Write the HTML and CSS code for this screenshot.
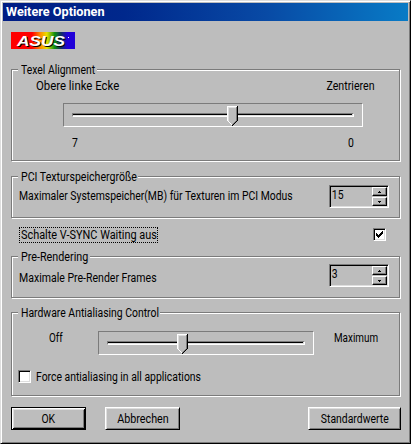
FILE: index.html
```html
<!DOCTYPE html>
<html lang="de">
<head>
    <meta charset="UTF-8">
    <meta name="viewport" content="width=device-width, initial-scale=1.0">
    <title>Weitere Optionen</title>
    <link rel="stylesheet" href="styles.css">
</head>
<body>
    <div class="window">
        <div class="title-bar">Weitere Optionen</div>

        <div class="content">
            <svg class="logo" width="64" height="17" viewBox="0 0 64 17">
                <defs>
                    <linearGradient id="rainbow">
                        <stop offset="0.33" stop-color="#ff0000"/>
                        <stop offset="0.46" stop-color="#ff8c00"/>
                        <stop offset="0.56" stop-color="#e8e000"/>
                        <stop offset="0.68" stop-color="#109010"/>
                        <stop offset="0.78" stop-color="#103060"/>
                        <stop offset="0.88" stop-color="#2000d8"/>
                    </linearGradient>
                </defs>
                <rect width="64" height="17" fill="url(#rainbow)"/>
                <text class="logo-shadow" x="7" y="15" textLength="48" lengthAdjust="spacingAndGlyphs">ASUS</text>
                <text class="logo-text" x="6" y="14" textLength="48" lengthAdjust="spacingAndGlyphs">ASUS</text>
                <rect x="57" y="5" width="1" height="1" fill="#fff"/>
            </svg>

            <div class="group texel">
                <div class="legend"><span class="text">Texel Alignment</span></div>
                <div class="labels ends">
                    <span class="text left-end">Obere linke Ecke</span>
                    <span class="text right-end">Zentrieren</span>
                </div>
                <div class="slider">
                    <div class="track"></div>
                    <svg class="thumb" width="11" height="20" viewBox="0 0 11 20" shape-rendering="crispEdges">
                        <path d="M0 0H11V15L6 20H5L0 15Z" fill="#bdbdbd"/>
                        <path d="M.5 15V.5H10M1 15.5h1M2 16.5h1M3 17.5h1M4 18.5h1" fill="none" stroke="#fff"/>
                        <path d="M1.5 15V1.5H9" fill="none" stroke="#dedede"/>
                        <path d="M9.5 1V15M8 15.5h1M7 16.5h1M6 17.5h1M5 18.5h1" fill="none" stroke="#7b7b7b"/>
                        <path d="M10.5 0V15M9 15.5h1M8 16.5h1M7 17.5h1M6 18.5h1M5 19.5h1" fill="none" stroke="#000"/>
                    </svg>
                </div>
                <div class="labels range">
                    <span class="text">7</span>
                    <span class="text">0</span>
                </div>
            </div>

            <div class="group pci">
                <div class="legend"><span class="text">PCI Texturspeichergröße</span></div>
                <div class="row">
                    <span class="text">Maximaler Systemspeicher(MB) für Texturen im PCI Modus</span>
                    <div class="spinner">
                        <span class="text value">15</span>
                        <div class="arrows">
                            <div class="arrow"><svg width="3" height="2" shape-rendering="crispEdges"><path d="M1 0h1v1H1zM0 1h3v1H0z"/></svg></div>
                            <div class="arrow"><svg width="3" height="2" shape-rendering="crispEdges"><path d="M0 0h3v1H0zM1 1h1v1H1z"/></svg></div>
                        </div>
                    </div>
                </div>
            </div>

            <div class="vsync">
                <div class="focus"><span class="text">Schalte V-SYNC Waiting aus</span></div>
                <div class="checkbox">
                    <svg width="7" height="7" shape-rendering="crispEdges"><path d="M0 2h1v1h1v1h1V3h1V2h1V1h1V0h1v3H6v1H5v1H4v1H3v1H2V6H1V5H0z"/></svg>
                </div>
            </div>

            <div class="group pre">
                <div class="legend"><span class="text">Pre-Rendering</span></div>
                <div class="row">
                    <span class="text">Maximale Pre-Render Frames</span>
                    <div class="spinner">
                        <span class="text value">3</span>
                        <div class="arrows">
                            <div class="arrow"><svg width="3" height="2" shape-rendering="crispEdges"><path d="M1 0h1v1H1zM0 1h3v1H0z"/></svg></div>
                            <div class="arrow"><svg width="3" height="2" shape-rendering="crispEdges"><path d="M0 0h3v1H0zM1 1h1v1H1z"/></svg></div>
                        </div>
                    </div>
                </div>
            </div>

            <div class="group antialias">
                <div class="legend"><span class="text">Hardware Antialiasing Control</span></div>
                <div class="aa-row">
                    <span class="text off">Off</span>
                    <div class="slider">
                        <div class="track"></div>
                        <svg class="thumb" width="11" height="20" viewBox="0 0 11 20" shape-rendering="crispEdges">
                            <path d="M0 0H11V15L6 20H5L0 15Z" fill="#bdbdbd"/>
                            <path d="M.5 15V.5H10M1 15.5h1M2 16.5h1M3 17.5h1M4 18.5h1" fill="none" stroke="#fff"/>
                            <path d="M1.5 15V1.5H9" fill="none" stroke="#dedede"/>
                            <path d="M9.5 1V15M8 15.5h1M7 16.5h1M6 17.5h1M5 18.5h1" fill="none" stroke="#7b7b7b"/>
                            <path d="M10.5 0V15M9 15.5h1M8 16.5h1M7 17.5h1M6 18.5h1M5 19.5h1" fill="none" stroke="#000"/>
                        </svg>
                    </div>
                    <span class="text maximum">Maximum</span>
                </div>
                <div class="force">
                    <div class="checkbox"></div>
                    <span class="text">Force antialiasing in all applications</span>
                </div>
            </div>

            <div class="buttons">
                <div class="button default"><span class="text">OK</span></div>
                <div class="button"><span class="text cancel">Abbrechen</span></div>
                <div class="button wide"><span class="text">Standardwerte</span></div>
            </div>
        </div>
    </div>
</body>
</html>
```
FILE: styles.css
```css
* {
    box-sizing: border-box;
}
body {
    margin: 0;
    font-family: Roboto, "Liberation Sans", sans-serif;
    font-size: 12.5px;
    line-height: 16px;
    color: #000;
    white-space: nowrap;
}
svg {
    display: block;
}
/* Condensed dialog font */
.text {
    display: inline-block;
    transform: scaleX(0.832);
    transform-origin: left;
}
.window {
    width: 411px;
    height: 444px;
    padding: 1px;
    background-color: #bdbdbd;
    border: 1px solid #dedede;
    border-right-color: #000;
    border-bottom-color: #000;
    box-shadow: inset 1px 1px #fff, inset -1px -1px #7b7b7b;
}
.title-bar {
    width: 405px;
    height: 18px;
    margin: 1px 0 0 1px;
    padding-left: 3px;
    background: linear-gradient(to right, #001c84, #00288c 30%, #084aa5 65%, #087bc6);
    color: #fff;
    font-size: 12.7px;
    font-weight: bold;
    line-height: 18px;
}
.content {
    padding: 11px 8px 0 9px;
}

/* Logo */
.logo-text,
.logo-shadow {
    font-family: "Liberation Sans", sans-serif;
    font-size: 14px;
    font-weight: bold;
    font-style: italic;
    fill: #fff;
}
.logo-shadow {
    fill: #000;
}

/* Etched group boxes */
.group {
    width: 389px;
    border: 1px solid #7b7b7b;
    box-shadow: 1px 1px #fff, inset 1px 1px #fff;
}
.legend {
    height: 16px;
    margin: -8px 0 0 6px;
    padding-left: 3px;
    background-color: #bdbdbd;
}
.texel {
    height: 92px;
    margin-top: 20px;
}
.texel .legend {
    width: 79px;
}
.pci {
    height: 42px;
    margin-top: 15px;
}
.pci .legend {
    width: 120px;
}
.pci .legend .text {
    transform: scaleX(0.847);
}
.pre {
    height: 42px;
    margin-top: 13px;
}
.pre .legend {
    width: 72px;
}
.pre .legend .text {
    transform: scaleX(0.86);
}
.antialias {
    height: 84px;
    margin-top: 14px;
}
.antialias .legend {
    width: 142px;
}
.labels {
    display: flex;
    justify-content: space-between;
}
.ends {
    padding: 0 24px;
}
.left-end {
    transform: scaleX(0.91);
}
.right-end {
    transform: scaleX(0.85);
    transform-origin: right;
}
.range {
    margin-top: 8px;
    padding: 0 44px 0 60px;
}
.row {
    display: flex;
    justify-content: space-between;
    padding: 0 10px 0 7px;
}
.row > .text {
    width: 0;
    padding-top: 3px;
}
.pre .row {
    margin-top: -1px;
}
.pre .row > .text {
    padding-top: 6px;
    transform: scaleX(0.842);
}

/* Sliders */
.slider {
    position: relative;
    width: 300px;
    height: 24px;
    padding: 9px 8px;
    border: 1px solid #fff;
    border-top-color: #7b7b7b;
    border-left-color: #7b7b7b;
}
.texel .slider {
    margin: 9px 0 0 51px;
}
.track {
    height: 4px;
    background-color: #000;
    border: 1px solid #fff;
    border-top-color: #7b7b7b;
    border-left-color: #7b7b7b;
    box-shadow: inset -1px -1px #dedede;
}
.thumb {
    position: absolute;
    left: 163px;
    top: 2px;
}

/* Spinners */
.spinner {
    display: flex;
    flex-shrink: 0;
    justify-content: space-between;
    width: 60px;
    height: 23px;
    padding: 1px;
    border: 1px solid #fff;
    border-top-color: #7b7b7b;
    border-left-color: #7b7b7b;
    box-shadow: inset 1px 1px #000, inset -1px -1px #dedede;
}
.value {
    padding-left: 1px;
}
.arrows {
    width: 15px;
}
.arrow {
    display: flex;
    align-items: center;
    justify-content: center;
    height: 9px;
    margin-bottom: 1px;
    border: 1px solid #fff;
    border-right-color: #000;
    border-bottom-color: #000;
    box-shadow: inset -1px -1px #7b7b7b;
}

/* Checkboxes */
.checkbox {
    width: 13px;
    height: 13px;
    padding: 2px;
    background-color: #fff;
    border: 1px solid #fff;
    border-top-color: #7b7b7b;
    border-left-color: #7b7b7b;
    box-shadow: inset 1px 1px #000, inset -1px -1px #dedede;
}
.vsync {
    display: flex;
    justify-content: space-between;
    margin-top: 9px;
    padding: 0 15px 0 8px;
}
.vsync .checkbox {
    margin-top: 1px;
}
.focus {
    width: 139px;
    height: 16px;
    padding-left: 1px;
    border: 1px dotted #000;
    line-height: 14px;
}
.focus .text {
    transform: scaleX(0.872);
}
.aa-row {
    display: flex;
    margin-top: 10px;
    padding-left: 37px;
}
.aa-row .text {
    height: 16px;
    margin-top: -1px;
    transform: scaleX(0.79);
}
.off {
    width: 49px;
}
.aa-row .slider {
    width: 216px;
    margin-right: 20px;
}
.aa-row .thumb {
    left: 78px;
}
.force {
    display: flex;
    gap: 5px;
    margin-top: 14px;
    padding-left: 6px;
}
.force .checkbox {
    margin-top: 1px;
}

/* Buttons */
.buttons {
    display: flex;
    gap: 19px;
    margin-top: 11px;
}
.button {
    width: 75px;
    height: 23px;
    border: 1px solid #fff;
    border-right-color: #000;
    border-bottom-color: #000;
    box-shadow: inset 1px 1px #dedede, inset -1px -1px #7b7b7b;
    line-height: 21px;
    text-align: center;
}
.button .text {
    transform-origin: center;
}
.button .cancel {
    transform: scaleX(0.86);
}
.default {
    border-color: #000;
    box-shadow: inset 1px 1px #fff, inset -1px -1px #000, inset 2px 2px #dedede, inset -2px -2px #7b7b7b;
}
.wide {
    width: 93px;
    margin-left: auto;
}
```
